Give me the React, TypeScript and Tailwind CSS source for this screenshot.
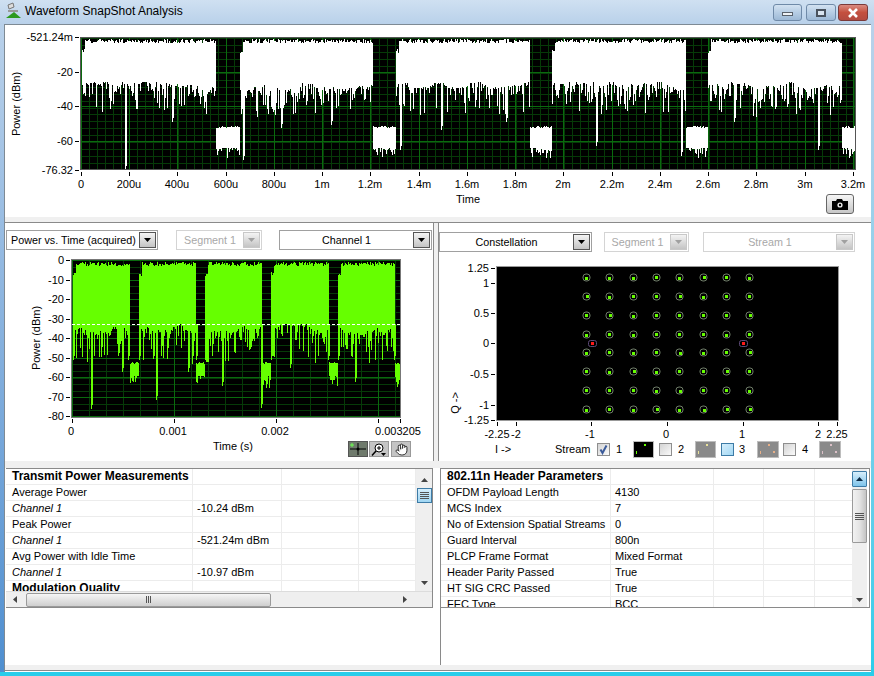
import React from "react";
import { Hand } from "lucide-react";

const FONT = "font-['Liberation_Sans',Arial,sans-serif]";

function rng(seed: number) {
  let s = seed;
  return () => {
    s = (s * 1664525 + 1013904223) % 4294967296;
    return s / 4294967296;
  };
}

type WaveCfg = {
  bursts: [number, number][];
  topBase: number;
  topVar: number;
  bottomBase: number;
  bottomVar: number;
  blobTop: number;
  blobBottom: number;
  blobVar: number;
  spikes: [number, number][];
  plotEnd: number;
  seed: number;
};

function wavePath(c: WaveCfg) {
  const r = rng(c.seed);
  let d = "";
  let walk = 0.5;
  c.bursts.forEach(([a, b], i) => {
    for (let x = a; x <= b; x++) {
      walk = Math.max(0, Math.min(1, walk + (r() - 0.5) * 0.5));
      const ragged = r();
      const top = c.topBase + r() * c.topVar + (x < a + 3 ? 10 : 0);
      const bot = c.bottomBase + (0.2 * walk + 0.8 * ragged * ragged * ragged) * c.bottomVar;
      d += `M${x + 0.5} ${top.toFixed(0)}V${bot.toFixed(0)}`;
    }
    const end = i < c.bursts.length - 1 ? c.bursts[i + 1][0] - 1 : c.plotEnd - 1;
    for (let x = b + 1; x <= end; x++) {
      const t = c.blobTop + r() * 2;
      const q = r();
      const bot = c.blobBottom + q * q * c.blobVar;
      d += `M${x + 0.5} ${t.toFixed(0)}V${bot.toFixed(0)}`;
    }
  });
  c.spikes.forEach(([x, y]) => {
    d += `M${x + 0.5} ${c.bottomBase}V${y}M${x + 1.5} ${c.bottomBase}V${y - 4}`;
  });
  return d;
}

const topWave = wavePath({
  bursts: [[82, 215], [240, 372], [396, 529], [552, 685], [708, 841]],
  topBase: 39,
  topVar: 4,
  bottomBase: 82,
  bottomVar: 36,
  blobTop: 126,
  blobBottom: 148,
  blobVar: 10,
  spikes: [[125, 170], [172, 122], [281, 128], [331, 125], [441, 130], [506, 122], [596, 146], [681, 156], [734, 122], [818, 150], [243, 160], [400, 150]],
  plotEnd: 856,
  seed: 11,
});

const leftWave = wavePath({
  bursts: [[73, 129], [139, 195], [205, 261], [271, 328], [338, 394]],
  topBase: 262,
  topVar: 4,
  bottomBase: 324,
  bottomVar: 42,
  blobTop: 362,
  blobBottom: 376,
  blobVar: 14,
  spikes: [[91, 409], [156, 400], [222, 386], [261, 408], [355, 382], [73, 360], [128, 360], [139, 360], [196, 360], [205, 360], [261, 360], [271, 360], [328, 360], [338, 360], [394, 360], [122, 372], [188, 372], [290, 368]],
  plotEnd: 400,
  seed: 29,
});

function Grid({ x0, x1, y0, y1, vMajor, vMinor, hMajor, hMinor }: { x0: number; x1: number; y0: number; y1: number; vMajor: number[]; vMinor: number[]; hMajor: number[]; hMinor: number[] }) {
  return (
    <g shapeRendering="crispEdges">
      {vMinor.map((x) => <line key={`a${x}`} x1={x} x2={x} y1={y0} y2={y1} stroke="#063a08" />)}
      {hMinor.map((y) => <line key={`b${y}`} y1={y} y2={y} x1={x0} x2={x1} stroke="#063a08" />)}
      {vMajor.map((x) => <line key={`c${x}`} x1={x} x2={x} y1={y0} y2={y1} stroke="#0a6a0e" />)}
      {hMajor.map((y) => <line key={`d${y}`} y1={y} y2={y} x1={x0} x2={x1} stroke="#0a6a0e" />)}
    </g>
  );
}

function range(a: number, b: number, step: number) {
  const o: number[] = [];
  for (let v = a; v <= b; v += step) o.push(Math.round(v) + 0.5);
  return o;
}

function YTicks({ x, ticks }: { x: number; ticks: [string, number][] }) {
  return (
    <g>
      {ticks.map(([t, y]) => (
        <g key={t}>
          <line x1={x - 5} x2={x - 1} y1={y + 0.5} y2={y + 0.5} stroke="#000" shapeRendering="crispEdges" />
          <text x={x - 7} y={y + 4} textAnchor="end" fontSize="11" fill="#000">{t}</text>
        </g>
      ))}
    </g>
  );
}

function XTicks({ y, ticks }: { y: number; ticks: [string, number, number?][] }) {
  return (
    <g>
      {ticks.map(([t, x, lx], i) => (
        <g key={i}>
          <line x1={x + 0.5} x2={x + 0.5} y1={y + 1} y2={y + 5} stroke="#000" shapeRendering="crispEdges" />
          {t ? <text x={lx ?? x} y={y + 17} textAnchor="middle" fontSize="11" fill="#000">{t}</text> : null}
        </g>
      ))}
    </g>
  );
}

function TopChart() {
  const xl = ["0", "200u", "400u", "600u", "800u", "1m", "1.2m", "1.4m", "1.6m", "1.8m", "2m", "2.2m", "2.4m", "2.6m", "2.8m", "3m", "3.2m"];
  const xs = [81, 129, 177, 226, 274, 322, 370, 419, 467, 515, 563, 612, 660, 708, 756, 805, 853];
  return (
    <svg width="866" height="192" viewBox="5 25 866 192" className="block">
      <rect x="80" y="37" width="776" height="133" fill="#000" />
      <Grid x0={81} x1={855} y0={38} y1={170}
        vMinor={range(81, 855, 8.05)} vMajor={xs.map((x) => x + 0.5)}
        hMinor={range(38, 170, 6.95)} hMajor={[72.5, 106.5, 141.5]} />
      <path d={topWave} stroke="#fff" strokeWidth="1" fill="none" shapeRendering="crispEdges" />
      <rect x="80.5" y="37.5" width="775" height="132" fill="none" stroke="#555" shapeRendering="crispEdges" />
      <YTicks x={80} ticks={[["-521.24m", 37], ["-20", 72], ["-40", 106], ["-60", 141], ["-76.32", 170]]} />
      <XTicks y={171} ticks={xl.map((t, i) => [t, xs[i], i === 16 ? 853 : undefined] as [string, number, number?])} />
      <text x="468" y="203" textAnchor="middle" fontSize="11">Time</text>
      <text transform="translate(20 104) rotate(-90)" textAnchor="middle" fontSize="11">Power (dBm)</text>
    </svg>
  );
}

function LeftChart() {
  const ys = [260, 280, 299, 319, 338, 358, 377, 397, 416];
  return (
    <svg width="428" height="207" viewBox="6 254 428 207" className="block">
      <rect x="71" y="259" width="329" height="158" fill="#000" />
      <Grid x0={72} x1={400} y0={260} y1={417}
        vMinor={range(72, 400, 17)} vMajor={[72.5, 174.5, 276.5, 378.5]}
        hMinor={range(260, 417, 6.53)} hMajor={ys.map((y) => y + 0.5)} />
      <path d={leftWave} stroke="#66ff00" strokeWidth="1" fill="none" shapeRendering="crispEdges" />
      <line x1="72" x2="400" y1="324.5" y2="324.5" stroke="#fff" strokeDasharray="3 2" shapeRendering="crispEdges" />
      <rect x="71.5" y="259.5" width="329" height="158" fill="none" stroke="#777" shapeRendering="crispEdges" />
      <YTicks x={71} ticks={["0", "-10", "-20", "-30", "-40", "-50", "-60", "-70", "-80"].map((t, i) => [t, ys[i]] as [string, number])} />
      <XTicks y={418} ticks={[["0", 72, 71], ["0.001", 174, 173], ["0.002", 276, 275], ["", 378], ["0.003205", 400, 398]]} />
      <text x="233" y="450" textAnchor="middle" fontSize="11">Time (s)</text>
      <text transform="translate(40 338) rotate(-90)" textAnchor="middle" fontSize="11">Power (dBm)</text>
    </svg>
  );
}

function ConstellationChart() {
  const xs = [586, 609, 633, 656, 679, 703, 726, 749];
  const ys = [277, 296, 315, 334, 352, 371, 390, 409];
  const r = rng(7);
  return (
    <svg width="432" height="186" viewBox="439 254 432 186" className="block">
      <rect x="496.5" y="266.5" width="342" height="154" fill="#000" stroke="#999" shapeRendering="crispEdges" />
      {ys.map((y) =>
        xs.map((x) => {
          const dx = Math.round(r() * 2 - 1);
          const dy = Math.round(r() * 2 - 1);
          return (
            <g key={`${x}-${y}`}>
              <rect x={x - 3} y={y - 3} width="7" height="7" rx="3" fill="none" stroke="#6f7d68" strokeWidth="1" />
              <rect x={x - 1 + dx * 0.5} y={y - 1 + dy * 0.5} width="3" height="3" fill="#66ff00" shapeRendering="crispEdges" />
            </g>
          );
        })
      )}
      {[592, 743].map((x) => (
        <g key={x}>
          <rect x={x - 3.5} y="340.5" width="8" height="6" rx="2" fill="none" stroke="#5d4a78" />
          <rect x={x - 1} y="342" width="3" height="3" fill="#ff1a1a" shapeRendering="crispEdges" />
        </g>
      ))}
      <YTicks x={496} ticks={[["1.25", 268], ["1", 283], ["0.5", 313], ["0", 343], ["-0.5", 374], ["-1", 405], ["-1.25", 420]]} />
      <XTicks y={421} ticks={[["-2.25", 497], ["-2", 516, 516], ["-1", 591, 590], ["0", 667, 666], ["1", 743, 742], ["2", 818, 818], ["2.25", 837, 837]]} />
      <text transform="translate(459 403) rotate(-90)" textAnchor="middle" fontSize="11">{"Q ->"}</text>
    </svg>
  );
}

function Arrow({ dir, color = "#333" }: { dir: "up" | "down" | "left" | "right"; color?: string }) {
  const d = { up: "M0 4L3.5 0L7 4Z", down: "M0 0L7 0L3.5 4Z", left: "M4 0V7L0 3.5Z", right: "M0 0V7L4 3.5Z" }[dir];
  const w = dir === "up" || dir === "down" ? 7 : 4;
  const h = dir === "up" || dir === "down" ? 4 : 7;
  return <svg width={w} height={h} className="block"><path d={d} fill={color} /></svg>;
}

function Combo({ w, label, disabled, center = true }: { w: string; label: string; disabled?: boolean; center?: boolean }) {
  return (
    <div className={`${w} h-[20px] flex items-center border ${disabled ? "border-[#d4d4d4] text-[#a8a8a8]" : "border-[#a0a0a0] text-black"} bg-white`}>
      <div className={`flex-1 text-[10.75px] leading-none whitespace-nowrap ${center ? "text-center" : "pl-1"}`}>{label}</div>
      <div className={`w-[17px] h-[16px] mr-[1px] flex items-center justify-center border bg-gradient-to-b from-[#f4f4f4] to-[#c4c4c4] ${disabled ? "border-[#c8c8c8]" : "border-[#555]"}`}>
        <Arrow dir="down" color={disabled ? "#a0a0a0" : "#000"} />
      </div>
    </div>
  );
}

function Check({ checked, blue }: { checked?: boolean; blue?: boolean }) {
  return (
    <div className={`w-[13px] h-[13px] border flex items-center justify-center ${blue ? "border-[#3d7ba6] bg-gradient-to-br from-[#d6eefb] to-[#a2d8f4]" : "border-[#8e8e8e] bg-gradient-to-br from-[#d4d4d4] to-[#fafafa]"}`}>
      {checked ? (
        <svg width="11" height="11" viewBox="0 0 11 11"><path d="M2.5 5.5L4.5 9L8.5 1.5" fill="none" stroke="#3a5a9a" strokeWidth="2" /></svg>
      ) : null}
    </div>
  );
}

function Swatch({ dark, dots, w = 21 }: { dark?: boolean; dots: string; w?: number }) {
  return (
    <svg width={w} height="17" className="block">
      <rect x="0.5" y="0.5" width={w - 1} height="16" fill={dark ? "#000" : "#8a8a8a"} stroke="#bdbdbd" />
      <rect x="11" y="3" width="2" height="2" fill={dots} />
      <rect x="3" y="10" width="1" height="3" fill={dots} />
      {!dark && dots !== "#e9e29a" ? <rect x="16" y="10" width="2" height="2" fill={dots} /> : null}
    </svg>
  );
}

type Row = { a: string; b?: string; bold?: boolean; italic?: boolean };

function TableBody({ rows, widths }: { rows: Row[]; widths: string[] }) {
  return (
    <div className="flex-1 min-w-0 overflow-hidden">
      {rows.map((r, i) => (
        <div key={i} className="flex h-[16px] border-b border-[#ececec] text-[11px] leading-[14px] text-black">
          <div className={`${widths[0]} shrink-0 pl-[6px] border-r border-[#ececec] whitespace-nowrap ${r.bold ? "font-bold text-[12px]" : ""} ${r.italic ? "italic" : ""}`}>{r.a}</div>
          <div className={`${widths[1]} shrink-0 pl-[4px] border-r border-[#ececec] whitespace-nowrap`}>{r.b}</div>
          <div className={`${widths[2]} shrink-0 border-r border-[#ececec]`} />
          <div className={`${widths[3]} shrink-0 border-r border-[#ececec]`} />
          <div className="flex-1" />
        </div>
      ))}
    </div>
  );
}

const leftRows: Row[] = [
  { a: "Transmit Power Measurements", bold: true },
  { a: "Average Power" },
  { a: "Channel 1", b: "-10.24 dBm", italic: true },
  { a: "Peak Power" },
  { a: "Channel 1", b: "-521.24m dBm", italic: true },
  { a: "Avg Power with Idle Time" },
  { a: "Channel 1", b: "-10.97 dBm", italic: true },
  { a: "Modulation Quality", bold: true },
];

const rightRows: Row[] = [
  { a: "802.11n Header Parameters", bold: true },
  { a: "OFDM Payload Length", b: "4130" },
  { a: "MCS Index", b: "7" },
  { a: "No of Extension Spatial Streams", b: "0" },
  { a: "Guard Interval", b: "800n" },
  { a: "PLCP Frame Format", b: "Mixed Format" },
  { a: "Header Parity Passed", b: "True" },
  { a: "HT SIG CRC Passed", b: "True" },
  { a: "FEC Type", b: "BCC" },
];

function Grip({ vertical }: { vertical?: boolean }) {
  return vertical ? (
    <div className="flex flex-col gap-[1px]">
      <div className="w-[9px] h-[1px] bg-[#555]" /><div className="w-[9px] h-[1px] bg-[#555]" /><div className="w-[9px] h-[1px] bg-[#555]" /><div className="w-[9px] h-[1px] bg-[#555]" />
    </div>
  ) : (
    <div className="flex gap-[1px]">
      <div className="w-[1px] h-[7px] bg-[#555]" /><div className="w-[1px] h-[7px] bg-[#555]" /><div className="w-[1px] h-[7px] bg-[#555]" />
    </div>
  );
}

function CaptionButton({ w, children, red }: { w: string; children: React.ReactNode; red?: boolean }) {
  return (
    <div className={`${w} h-[17px] rounded-[3px] border flex items-center justify-center ${red ? "border-[#7a3a3a] bg-gradient-to-b from-[#d98a80] via-[#c4503f] to-[#b34a40]" : "border-[#6f8aa8] bg-gradient-to-b from-[#d3e2f1] via-[#b6cde4] to-[#9db9d6]"}`}>
      {children}
    </div>
  );
}

export default function App() {
  return (
    <div className={`${FONT} w-[874px] h-[676px] flex flex-col bg-[#b9d1ea] overflow-hidden text-black`}>
      <div className="h-[24px] shrink-0 flex items-start bg-gradient-to-b from-[#cfe0f1] to-[#b9d1ea]">
        <svg width="18" height="17" viewBox="0 0 18 17" className="block ml-[5px] mt-[2px]">
          <path d="M3 3L8 1L9 5L4 7Z" fill="#ddd" stroke="#777" />
          <path d="M3 9H13" stroke="#999" strokeWidth="2" />
          <path d="M1 16L9 10L16 16Z" fill="#2d9a1e" />
        </svg>
        <div className="ml-[2px] mt-[4px] text-[12px] leading-[15px] whitespace-nowrap">Waveform SnapShot Analysis</div>
        <div className="ml-auto mr-[6px] mt-[4px] flex">
          <CaptionButton w="w-[29px]"><div className="w-[11px] h-[4px] mt-[3px] bg-[#eef2f6] border border-[#59616b]" /></CaptionButton>
          <div className="w-[4px]" />
          <CaptionButton w="w-[30px]"><div className="w-[10px] h-[8px] border-2 border-[#49525d] bg-[#d9e4ef]" /></CaptionButton>
          <div className="w-[2px]" />
          <CaptionButton w="w-[30px]" red>
            <svg width="12" height="10" viewBox="0 0 12 10"><path d="M2 1L10 9M10 1L2 9" stroke="#fff" strokeWidth="2.6" /></svg>
          </CaptionButton>
        </div>
      </div>

      <div className="flex-1 min-h-0 flex">
        <div className="w-[4px] shrink-0 bg-gradient-to-b from-[#b9d1ea] to-[#4f8fd0]" />
        <div className="w-[867px] shrink-0 bg-white border-l border-t border-[#7e8a94] flex flex-col">
          <div className="relative h-[192px] shrink-0">
            <TopChart />
            <div className="absolute left-[821px] top-[169px] w-[28px] h-[20px] rounded-[3px] border border-[#666] bg-gradient-to-b from-[#f6f6f6] to-[#c6c6c6] flex items-center justify-center">
              <svg width="16" height="11" viewBox="0 0 16 11">
                <path d="M0 2H4L5 0H10L11 2H16V11H0Z" fill="#000" />
                <circle cx="8" cy="6" r="2.6" fill="#eee" />
                <circle cx="8" cy="6" r="1.2" fill="#000" />
              </svg>
            </div>
          </div>
          <div className="h-[6px] shrink-0 bg-[#f0f0f0] border-b border-[#8a8a8a]" />

          <div className="h-[238px] shrink-0 flex">
            <div className="w-[429px] shrink-0 border-r border-[#8a8a8a] flex flex-col pl-[1px]">
              <div className="h-[31px] shrink-0 flex items-start pt-[7px]">
                <Combo w="w-[152px]" label="Power vs. Time (acquired)" center={false} />
                <div className="w-[18px]" />
                <Combo w="w-[86px]" label="Segment 1" disabled />
                <div className="w-[17px]" />
                <Combo w="w-[153px]" label="Channel 1" />
              </div>
              <div className="relative">
                <LeftChart />
                <div className="absolute left-[342px] top-[187px] flex">
                  <div className="w-[20px] h-[16px] bg-[#6f7a6c] border border-[#555] flex items-center justify-center">
                    <svg width="16" height="12" viewBox="0 0 16 12"><path d="M8 0V12M0 6H16" stroke="#000" /><circle cx="8" cy="6" r="1.5" /><path d="M0 2H4M2 0V4" stroke="#6dff50" /></svg>
                  </div>
                  <div className="w-[20px] h-[16px] ml-[1px] bg-[#c4c4c4] border border-[#999] flex items-center justify-center">
                    <svg width="16" height="13" viewBox="0 0 16 13"><circle cx="8" cy="5" r="4" fill="#fff" stroke="#000" /><path d="M8 3V7M6 5H10" stroke="#000" /><path d="M5 8L1 12.5" stroke="#000" strokeWidth="1.5" /><path d="M10 10H15L12.5 13Z" fill="#000" /></svg>
                  </div>
                  <div className="w-[20px] h-[16px] ml-[2px] bg-[#c4c4c4] border border-[#999] flex items-center justify-center">
                    <Hand size={13} strokeWidth={1.5} color="#000" fill="#fff" />
                  </div>
                </div>
              </div>
            </div>
            <div className="w-[4px] shrink-0 bg-[#f0f0f0]" />
            <div className="flex-1 min-w-0 border-l border-[#8a8a8a] flex flex-col">
              <div className="h-[31px] shrink-0 flex items-start pt-[9px]">
                <Combo w="w-[153px]" label="Constellation" />
                <div className="w-[12px]" />
                <Combo w="w-[85px]" label="Segment 1" disabled />
                <div className="w-[14px]" />
                <Combo w="w-[152px]" label="Stream 1" disabled />
              </div>
              <ConstellationChart />
              <div className="flex-1 flex items-center pb-[2px] text-[11px] leading-none">
                <div className="ml-[56px] w-[60px] whitespace-nowrap">{"I ->"}</div>
                <div className="w-[42px] whitespace-nowrap">Stream</div>
                <Check checked />
                <div className="w-[23px] pl-[6px]">1</div>
                <Swatch dark dots="#66ff00" />
                <div className="ml-[5px]"><Check /></div>
                <div className="w-[23px] pl-[6px]">2</div>
                <Swatch dots="#e9e29a" />
                <div className="ml-[5px]"><Check blue /></div>
                <div className="w-[23px] pl-[5px]">3</div>
                <Swatch w={22} dots="#e8b088" />
                <div className="ml-[4px]"><Check /></div>
                <div className="w-[23px] pl-[6px]">4</div>
                <Swatch w={22} dots="#dcc0c8" />
              </div>
            </div>
          </div>

          <div className="h-[7px] shrink-0 bg-[#f0f0f0]" />

          <div className="flex h-[140px] shrink-0">
            <div className="w-[427px] ml-[1px] shrink-0 border-t border-b border-r border-[#8a8a8a] flex flex-col bg-white">
              <div className="flex h-[122px] overflow-hidden">
                <TableBody rows={leftRows} widths={["w-[187px]", "w-[89px]", "w-[77px]", "w-[57px]"]} />
                <div className="w-[16px] shrink-0 bg-[#efefef] flex flex-col items-center">
                  <div className="h-[19px] flex items-center justify-center pt-[3px]"><Arrow dir="up" color="#444" /></div>
                  <div className="w-[15px] h-[15px] border border-[#3d7ba6] bg-gradient-to-b from-[#d6eefb] to-[#9fd6f3] flex items-center justify-center"><Grip vertical /></div>
                  <div className="mt-auto mb-[6px]"><Arrow dir="down" color="#444" /></div>
                </div>
              </div>
              <div className="flex-1 bg-[#efefef] border-t border-[#dcdcdc] flex items-center">
                <div className="ml-[7px]"><Arrow dir="left" color="#444" /></div>
                <div className="ml-[9px] w-[245px] h-[14px] border border-[#9a9a9a] rounded-[2px] bg-gradient-to-b from-[#f6f6f6] to-[#cfcfcf] flex items-center justify-center"><Grip /></div>
                <div className="ml-[132px]"><Arrow dir="right" color="#444" /></div>
              </div>
            </div>
            <div className="w-[7px] shrink-0" />
            <div className="flex-1 min-w-0 mr-[1px] border-t border-b border-l border-r border-[#8a8a8a] flex">
              <TableBody rows={rightRows} widths={["w-[170px]", "w-[103px]", "w-[50px]", "w-[51px]"]} />
              <div className="w-[15px] shrink-0 mr-[2px] bg-[#efefef] flex flex-col">
                <div className="h-[16px] mt-[2px] border border-[#3d7ba6] rounded-[1px] bg-gradient-to-b from-[#d6eefb] to-[#7fc4ea] flex items-center justify-center"><Arrow dir="up" color="#0b2a44" /></div>
                <div className="h-[54px] mt-[2px] border border-[#9a9a9a] rounded-[1px] bg-gradient-to-r from-[#f2f2f2] via-[#e4e4e4] to-[#c4c4c4] flex items-center justify-center"><Grip vertical /></div>
                <div className="mt-auto mb-[5px] flex justify-center"><Arrow dir="down" color="#444" /></div>
              </div>
            </div>
          </div>

          <div className="flex-1 flex">
            <div className="w-[436px] shrink-0 border-r border-[#8a8a8a]" />
          </div>
          <div className="h-[6px] shrink-0 bg-[#f0f0f0] border-b border-[#8a8a8a]" />
          <div className="h-[1px] shrink-0" />
        </div>
        <div className="flex-1 bg-gradient-to-b from-[#b9d1ea] to-[#29cdea]" />
      </div>
      <div className="h-[4px] shrink-0 bg-[#29cdea]" />
    </div>
  );
}
